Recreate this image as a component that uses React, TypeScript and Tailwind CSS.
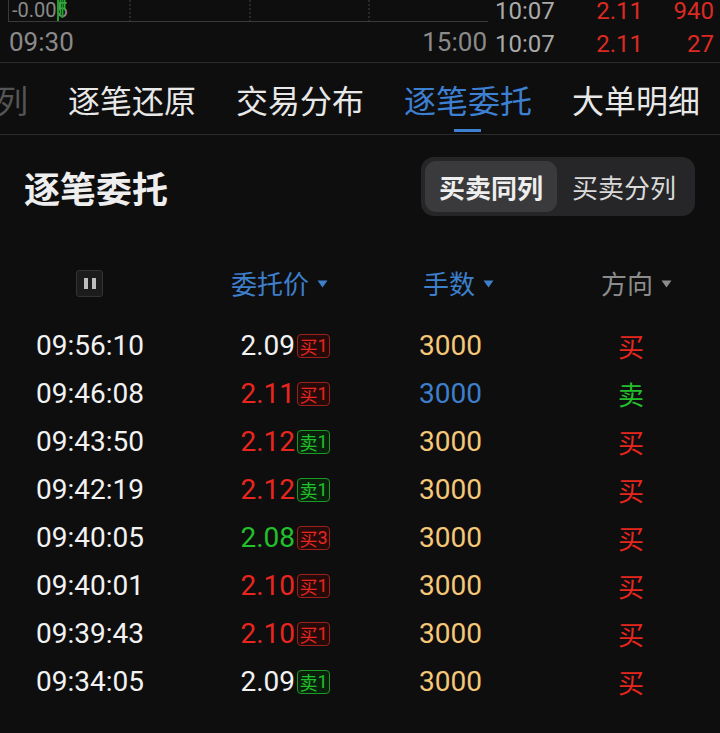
import React from "react";

const CJK = { fontFamily: '"Noto Sans CJK SC", "Noto Sans", sans-serif' };
const NUM = { fontFamily: 'Roboto, "Noto Sans CJK SC", sans-serif' };

type Row = {
  t: string;
  p: string;
  pc: string;
  b: string;
  bc: "red" | "green";
  v: string;
  vc: string;
  d: string;
  dc: string;
};

const RED = "text-[#e8261f]";
const GREEN = "text-[#22c02a]";
const WHITE = "text-[#f2f2f2]";
const YEL = "text-[#f6c777]";
const BLUE = "text-[#3d7fcb]";

const rows: Row[] = [
  { t: "09:56:10", p: "2.09", pc: WHITE, b: "买1", bc: "red", v: "3000", vc: YEL, d: "买", dc: RED },
  { t: "09:46:08", p: "2.11", pc: RED, b: "买1", bc: "red", v: "3000", vc: BLUE, d: "卖", dc: GREEN },
  { t: "09:43:50", p: "2.12", pc: RED, b: "卖1", bc: "green", v: "3000", vc: YEL, d: "买", dc: RED },
  { t: "09:42:19", p: "2.12", pc: RED, b: "卖1", bc: "green", v: "3000", vc: YEL, d: "买", dc: RED },
  { t: "09:40:05", p: "2.08", pc: GREEN, b: "买3", bc: "red", v: "3000", vc: YEL, d: "买", dc: RED },
  { t: "09:40:01", p: "2.10", pc: RED, b: "买1", bc: "red", v: "3000", vc: YEL, d: "买", dc: RED },
  { t: "09:39:43", p: "2.10", pc: RED, b: "买1", bc: "red", v: "3000", vc: YEL, d: "买", dc: RED },
  { t: "09:34:05", p: "2.09", pc: WHITE, b: "卖1", bc: "green", v: "3000", vc: YEL, d: "买", dc: RED },
];

function Arrow({ color }: { color: string }) {
  return (
    <svg width="11" height="8" viewBox="0 0 11 8" className="ml-[8px] mt-[2px]">
      <path d="M0.5 0.5 L10.5 0.5 L5.5 7.5 Z" fill={color} />
    </svg>
  );
}

function Badge({ text, color }: { text: string; color: "red" | "green" }) {
  const cls =
    color === "red"
      ? "border-[#9c201b] bg-[#240b0a] text-[#e8261f]"
      : "border-[#1c9a24] bg-[#0a200c] text-[#22c02a]";
  return (
    <span
      className={`ml-[2px] flex h-[24px] w-[33px] items-center justify-center rounded-[4px] border text-[18px] leading-none ${cls}`}
      style={CJK}
    >
      <span>{text[0]}</span>
      <span style={NUM} className="text-[18px]">{text.slice(1)}</span>
    </span>
  );
}

export default function App() {
  return (
    <div className="h-[733px] w-[720px] overflow-hidden bg-[#0e0e0e]" style={NUM}>
      {/* top chart strip */}
      <div className="flex h-[63px] border-b border-[#2a2a2a]">
        <div className="flex w-[495px] flex-col">
          <div className="relative ml-[8px] h-[22px] w-[480px] overflow-hidden border-b border-l border-[#3a3a3a]">
            <svg width="480" height="22" className="absolute left-0 top-0">
              <line x1="121" y1="0" x2="121" y2="22" stroke="#444" strokeDasharray="2 2" />
              <line x1="241" y1="0" x2="241" y2="22" stroke="#444" strokeDasharray="2 2" />
              <line x1="360" y1="0" x2="360" y2="22" stroke="#444" strokeDasharray="2 2" />
            </svg>
            <span className="absolute left-[3px] top-0 text-[20px] leading-[20px] text-[#8a8a8a]">
              -0.005
            </span>
            <svg width="480" height="22" className="absolute left-0 top-0">
              <rect x="48" y="0" width="2" height="21" fill="#1f9e2a" />
              <rect x="50.5" y="0" width="1.5" height="14" fill="#22b02e" />
              <rect x="52.5" y="0" width="2" height="18" fill="#1f9e2a" />
              <rect x="55" y="0" width="1.5" height="10" fill="#22b02e" />
            </svg>
          </div>
          <div className="flex h-[40px] items-center justify-between pl-[9px] pr-[8px] text-[26px] leading-[40px] text-[#8a8a8a]">
            <span>09:30</span>
            <span>15:00</span>
          </div>
        </div>
        <div className="-mt-[5px] flex flex-col text-[24px] leading-[33px]">
          {[["10:07", "2.11", "940"], ["10:07", "2.11", "27"]].map((r, i) => (
            <div key={i} className="flex h-[33px]">
              <span className="w-[60px] text-[#aaaaaa]">{r[0]}</span>
              <span className="w-[88px] text-right text-[#dc2a22]">{r[1]}</span>
              <span className="w-[71px] text-right text-[#dc2a22]">{r[2]}</span>
            </div>
          ))}
        </div>
      </div>

      {/* tabs */}
      <div
        className="-ml-[4px] flex h-[72px] items-center gap-[40px] border-b border-[#2a2a2a] text-[32px] leading-none text-[#e8e8e8]"
        style={CJK}
      >
        <span className="-ml-[40px] w-[72px] text-right text-[#555555]">列</span>
        <span>逐笔还原</span>
        <span>交易分布</span>
        <span className="relative flex h-full items-center text-[#3d80d2]">
          逐笔委托
          <span className="absolute bottom-[2px] left-[50px] h-[3px] w-[27px] bg-[#3d80d2]" />
        </span>
        <span>大单明细</span>
      </div>

      {/* title + toggle */}
      <div className="flex items-center justify-between pl-[24px] pr-[25px] pt-[22px]" style={CJK}>
        <span className="text-[36px] font-bold leading-none text-[#eeeeee]">逐笔委托</span>
        <div className="flex rounded-[13px] bg-[#262628] p-[4px]">
          <div className="flex h-[51px] w-[132px] items-center justify-center rounded-[11px] bg-[#3a3a3c] text-[26px] font-bold text-[#eeeeee]">
            买卖同列
          </div>
          <div className="flex h-[51px] w-[134px] items-center justify-center text-[26px] text-[#dadada]">
            买卖分列
          </div>
        </div>
      </div>

      {/* header */}
      <div className="mt-[43px] flex h-[48px] items-center text-[26px] leading-none" style={CJK}>
        <div className="w-[200px] pl-[76px]">
          <div className="flex h-[27px] w-[27px] items-center justify-center gap-[4px] rounded-[3px] border border-[#333333] bg-[#1c1c1c]">
            <span className="h-[11px] w-[4px] bg-[#bdbdbd]" />
            <span className="h-[11px] w-[4px] bg-[#bdbdbd]" />
          </div>
        </div>
        <div className="flex w-[140px] items-center justify-end pr-[12px] text-[#3d7fcb]">
          委托价
          <Arrow color="#3d7fcb" />
        </div>
        <div className="flex w-[200px] items-center pl-[83px] text-[#3d7fcb]">
          手数
          <Arrow color="#3d7fcb" />
        </div>
        <div className="flex w-[180px] items-center pl-[61px] text-[#8c8c8c]">
          方向
          <Arrow color="#8c8c8c" />
        </div>
      </div>

      {/* rows */}
      <div className="flex flex-col pt-[15px]">
        {rows.map((r, i) => (
          <div key={i} className="flex h-[48px] items-center text-[28px] leading-none">
            <div className={`w-[200px] pl-[36px] ${WHITE}`}>{r.t}</div>
            <div className="flex w-[140px] items-center justify-end pr-[10px]">
              <span className={r.pc}>{r.p}</span>
              <Badge text={r.b} color={r.bc} />
            </div>
            <div className={`w-[200px] pl-[79px] ${r.vc}`}>{r.v}</div>
            <div className={`w-[180px] pl-[78px] text-[26px] ${r.dc}`} style={CJK}>
              {r.d}
            </div>
          </div>
        ))}
      </div>
    </div>
  );
}
